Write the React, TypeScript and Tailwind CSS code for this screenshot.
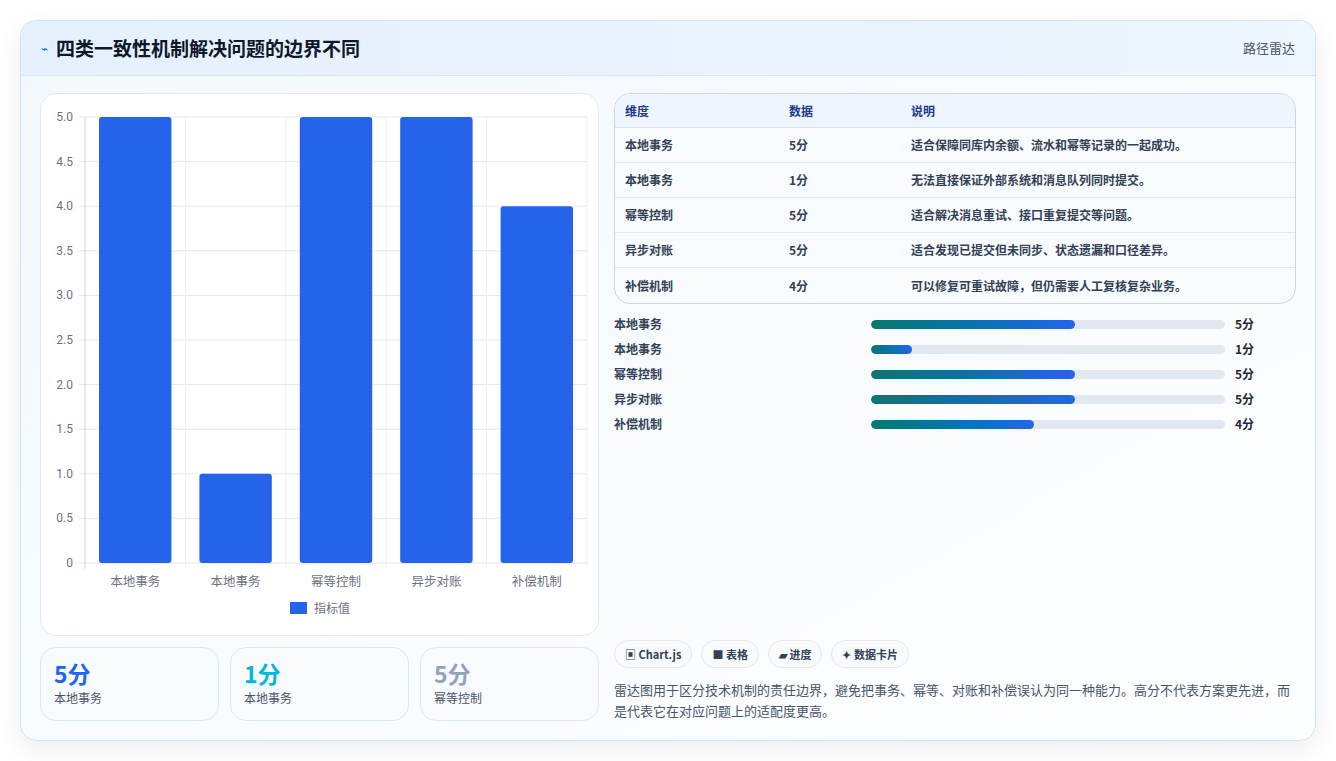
const rows = [
  { name: "本地事务", score: 5, desc: "适合保障同库内余额、流水和幂等记录的一起成功。" },
  { name: "本地事务", score: 1, desc: "无法直接保证外部系统和消息队列同时提交。" },
  { name: "幂等控制", score: 5, desc: "适合解决消息重试、接口重复提交等问题。" },
  { name: "异步对账", score: 5, desc: "适合发现已提交但未同步、状态遗漏和口径差异。" },
  { name: "补偿机制", score: 4, desc: "可以修复可重试故障，但仍需要人工复核复杂业务。" },
];

const Chart = () => {
  const left = 44, right = 546, top = 23, bottom = 469;
  const cw = (right - left) / 5;
  const ticks = [0, 0.5, 1, 1.5, 2, 2.5, 3, 3.5, 4, 4.5, 5];
  const y = (v: number) => bottom - (v / 5) * (bottom - top);
  return (
    <svg width="558" height="541" style={{ fontFamily: "'Noto Sans CJK SC', sans-serif" }}>
      {ticks.map((t) => (
        <g key={t}>
          <line x1={left - 6} x2={right} y1={y(t)} y2={y(t)} stroke="#e5e7eb" />
          <text x={left - 12} y={y(t) + 4} fontSize="12" fill="#6b7280" textAnchor="end" fontFamily="Roboto, sans-serif">
            {t === 0 ? "0" : t.toFixed(1)}
          </text>
        </g>
      ))}
      {[0, 1, 2, 3, 4, 5].map((i) => (
        <line key={i} x1={left + i * cw} x2={left + i * cw} y1={top} y2={bottom + 6} stroke={i === 0 ? "#d1d5db" : "#eef0f3"} />
      ))}
      {rows.map((r, i) => (
        <g key={i}>
          <rect x={left + i * cw + 14} y={y(r.score)} width={cw - 28} height={bottom - y(r.score)} rx="3" fill="#2563eb" />
          <text x={left + i * cw + cw / 2} y={492} fontSize="12.5" fill="#6b7280" textAnchor="middle">{r.name}</text>
        </g>
      ))}
      <rect x="249" y="508" width="17" height="12" fill="#2563eb" />
      <text x="273" y="519" fontSize="12" fill="#6b7280">指标值</text>
    </svg>
  );
};

export default function App() {
  return (
    <div className="min-h-screen bg-white p-5" style={{ fontFamily: "'Noto Sans CJK SC', 'Noto Sans', sans-serif" }}>
      <div className="rounded-2xl border border-[#cfe3f3] overflow-hidden shadow-[0_8px_24px_rgba(15,23,42,0.08)] bg-gradient-to-br from-[#f3f8fd] to-[#fdfeff]">
        <div className="h-[55px] flex items-center justify-between px-5 bg-gradient-to-r from-[#e4f0fd] to-[#eef6fe] border-b border-[#d6e8f8]">
          <div className="flex items-center gap-2">
            <span className="text-[#2563eb] text-xs">⌁</span>
            <span className="text-[19px] font-bold text-[#0f172a]">四类一致性机制解决问题的边界不同</span>
          </div>
          <span className="text-[13px] text-[#475569]">路径雷达</span>
        </div>
        <div className="flex gap-[15px] px-[19px] pt-[17px] pb-[19px]">
          <div className="w-[559px] flex flex-col gap-[11px]">
            <div className="h-[543px] rounded-2xl border border-[#e2e8f0] bg-white">
              <Chart />
            </div>
            <div className="grid grid-cols-3 gap-[11px]">
              {[
                { v: "5分", c: "text-[#2563eb]", l: "本地事务" },
                { v: "1分", c: "text-[#06b6d4]", l: "本地事务" },
                { v: "5分", c: "text-[#94a3b8]", l: "幂等控制" },
              ].map((s, i) => (
                <div key={i} className="h-[74px] rounded-2xl border border-[#dbe7f3] bg-[#f8fbfe] px-[13px] pt-[10px]">
                  <div className={`text-[23px] font-bold leading-[30px] ${s.c}`}>{s.v}</div>
                  <div className="text-xs text-[#475569] mt-[2px]">{s.l}</div>
                </div>
              ))}
            </div>
          </div>
          <div className="flex-1 flex flex-col">
            <div className="rounded-2xl border border-[#cbd5e1] overflow-hidden bg-[#f8fbfd] text-xs">
              <div className="flex h-[34px] items-center bg-[#eef5fd] border-b border-[#d6e2ee] text-[#1e3a8a] font-semibold px-[10px]">
                <div className="w-[164px]">维度</div>
                <div className="w-[122px]">数据</div>
                <div>说明</div>
              </div>
              {rows.map((r, i) => (
                <div key={i} className={`flex h-[35px] items-center px-[10px] text-[#334155] font-semibold ${i < 4 ? "border-b border-[#e2e8f0]" : ""}`}>
                  <div className="w-[164px]">{r.name}</div>
                  <div className="w-[122px]">{r.score}分</div>
                  <div>{r.desc}</div>
                </div>
              ))}
            </div>
            <div className="flex flex-col gap-[11px] mt-[13px]">
              {rows.map((r, i) => (
                <div key={i} className="flex items-center h-[14px] text-xs font-semibold text-[#334155]">
                  <div className="w-[257px]">{r.name}</div>
                  <div className="w-[354px] h-[9px] rounded-full bg-[#e2e8f0] overflow-hidden">
                    <div className="h-full rounded-full bg-gradient-to-r from-[#0f766e] to-[#2563eb]" style={{ width: `${r.score * 11.5}%` }} />
                  </div>
                  <div className="ml-[10px] text-[#1f2937]">{r.score}分</div>
                </div>
              ))}
            </div>
            <div className="flex-1" />
            <div className="flex gap-[9px]">
              {["▣ Chart.js", "■ 表格", "▰ 进度", "✦ 数据卡片"].map((c) => (
                <div key={c} className="h-[28px] px-[10px] rounded-full border border-[#e2e8f0] bg-[#f8fafc] flex items-center text-[11px] font-semibold text-[#334155]">
                  {c}
                </div>
              ))}
            </div>
            <p className="mt-[11px] text-[13px] leading-[21px] text-[#475569]">
              雷达图用于区分技术机制的责任边界，避免把事务、幂等、对账和补偿误认为同一种能力。高分不代表方案更先进，而是代表它在对应问题上的适配度更高。
            </p>
          </div>
        </div>
      </div>
    </div>
  );
}
